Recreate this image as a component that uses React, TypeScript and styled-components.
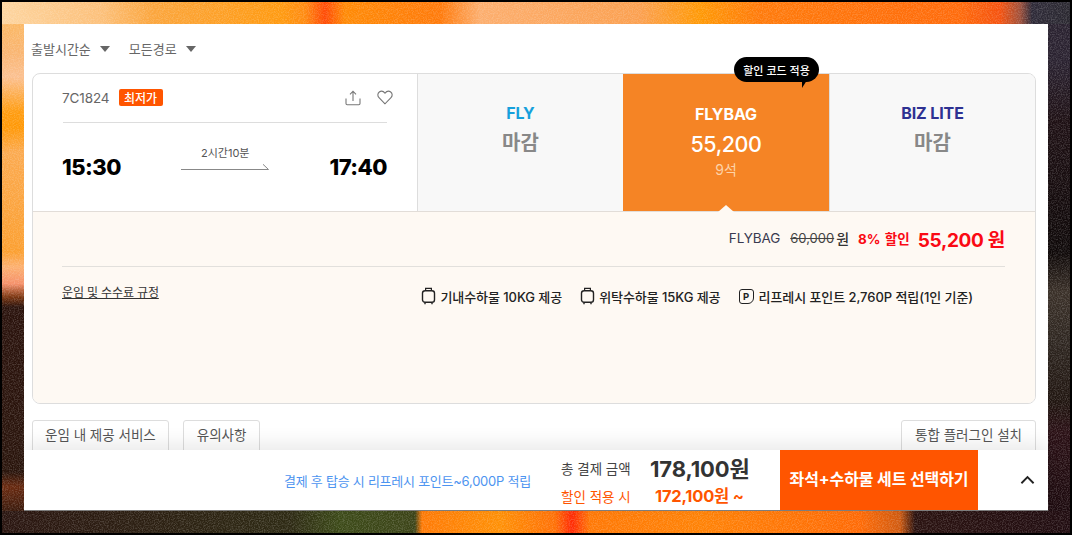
import React from "react";
import styled, { createGlobalStyle } from "styled-components";

const FONT = `Inter, "Noto Sans CJK KR", "Noto Sans", sans-serif`;
const ORANGE = "#ff5500";
const RED = "#fa0a14";

const Global = createGlobalStyle`
  html, body { margin: 0; padding: 0; background: #000; overflow: hidden; }
  * { box-sizing: border-box; }
  body { font-family: ${FONT}; }
`;

const Shell = styled.div`
  width: 1072px;
  height: 535px;
  padding: 2px;
  background: #000;
`;

const Stage = styled.div`
  position: relative;
  width: 1068px;
  height: 531px;
  padding: 22px;
  background-repeat: no-repeat;
  background-position: 0 0, 0 509px, 0 22px, 1046px 22px;
  background-size: 1068px 22px, 1068px 22px, 22px 487px, 22px 487px;
  background-image:
    linear-gradient(90deg, #fdd5a0 0, #fcc07a 100px, #fba63e 150px, #ff9a10 280px, #ff8a10 303px, #ff4a05 323px, #ff8a05 343px, #ff7a0a 438px, #fcae6e 478px, #fba050 638px, #ff9905 698px, #ff7a0a 758px, #ff6a0a 958px, #f5520f 998px, #a0503a 1018px, #2e2a38 1030px, #2a2830 1068px),
    linear-gradient(90deg, #2a1510 0, #2e2a14 288px, #3c4a18 338px, #3c4418 413px, #ff7a05 420px, #ff9005 498px, #ff7005 553px, #ff2a05 570px, #ff7805 588px, #ff8205 698px, #ff6a05 858px, #d05a10 898px, #2a1210 913px, #200c10 1068px),
    linear-gradient(180deg, #fbb865 0, #f9b571 28px, #fbc090 53px, #ff9c10 88px, #ff9805 103px, #fbaa50 128px, #fb9f30 228px, #fcb070 243px, #f5906a 260px, #7a3510 273px, #2a120c 283px, #2a150c 448px, #6a2a10 463px, #3a1a0c 487px),
    linear-gradient(180deg, #2a2230 0, #2a2230 38px, #1e1014 98px, #0e0808 228px, #3a3028 268px, #2e2620 318px, #201510 378px, #2a1015 408px, #1c0a0e 487px);
`;

const Grain = styled.svg`
  position: absolute;
  inset: 0;
  width: 100%;
  height: 100%;
  opacity: 0.16;
`;

const Modal = styled.div`
  position: relative;
  width: 1024px;
  height: 487px;
  background: #fff;
  display: flex;
  flex-direction: column;
  border-bottom: 1px solid #808080;
`;

const Scroll = styled.div`
  flex: 1;
  min-height: 0;
  overflow: hidden;
  padding: 16px 12px 0 8px;
`;

const Filters = styled.div`
  display: flex;
  align-items: center;
  gap: 19px;
  height: 16px;
  margin-bottom: 17px;
`;

const Filter = styled.div`
  display: flex;
  align-items: center;
  gap: 9px;
  font-size: 13px;
  color: #666;
  margin-left: -1px;
  margin-right: 1px;
`;

const Caret = styled.span`
  width: 0;
  height: 0;
  margin-top: 1px;
  border-left: 5px solid transparent;
  border-right: 5px solid transparent;
  border-top: 6px solid #666;
`;

const Card = styled.div`
  height: 331px;
  border: 1px solid #ddd;
  border-radius: 8px;
  display: flex;
  flex-direction: column;
`;

const TopRow = styled.div`
  display: grid;
  grid-template-columns: 385px 205px 206px 1fr;
  height: 138px;
  flex: none;
  border-bottom: 1px solid #e2ddd8;
`;

const Flight = styled.div`
  padding: 14px 30px 0 29px;
  border-right: 1px solid #ddd;
  display: flex;
  flex-direction: column;
`;

const FlightHead = styled.div`
  display: flex;
  align-items: center;
  height: 19px;
  margin-bottom: 15px;
`;

const FlightNo = styled.span`
  font-size: 13.5px;
  color: #666;
  letter-spacing: -0.1px;
`;

const Badge = styled.span`
  margin-left: 9px;
  width: 44px;
  height: 17px;
  background: ${ORANGE};
  color: #fff;
  border-radius: 2px;
  font-size: 12px;
  font-weight: 500;
  display: flex;
  align-items: center;
  justify-content: center;
`;

const HeadIcons = styled.div`
  margin-left: auto;
  display: flex;
  align-items: center;
  gap: 16px;
  margin-right: -6px;
`;

const Rule = styled.div`
  height: 1px;
  background: #ddd;
  margin-left: 1px;
`;

const Times = styled.div`
  display: flex;
  justify-content: space-between;
  align-items: center;
  margin-top: 19px;
`;

const Time = styled.span`
  font-size: 22px;
  font-weight: 800;
  color: #000;
  line-height: 50px;
  letter-spacing: -0.5px;
`;

const Duration = styled.div`
  display: flex;
  flex-direction: column;
  align-items: center;
  gap: 2px;
  font-size: 11px;
  line-height: 14px;
  color: #555;
  margin-top: -17px;
`;

const Fare = styled.div<{ $active?: boolean; $last?: boolean }>`
  position: relative;
  display: flex;
  flex-direction: column;
  align-items: center;
  background: ${(p) => (p.$active ? "#f58425" : "#f8f8f8")};
  padding-top: ${(p) => (p.$active ? "30px" : "29px")};
  border-left: ${(p) => (p.$last ? "1px solid #ddd" : "0")};
  border-top-right-radius: ${(p) => (p.$last ? "7px" : "0")};
`;

const FareName = styled.div<{ $color: string }>`
  font-size: 16px;
  font-weight: 700;
  line-height: 20px;
  color: ${(p) => p.$color};
  letter-spacing: -0.1px;
`;

const Closed = styled.div`
  margin-top: 8px;
  font-size: 20px;
  font-weight: 700;
  line-height: 24px;
  color: #888;
`;

const FarePrice = styled.div`
  margin-top: 5px;
  font-size: 21.5px;
  font-weight: 500;
  line-height: 30px;
  color: #fff;
  letter-spacing: -0.4px;
`;

const Seats = styled.div`
  margin-top: 1px;
  font-size: 14px;
  line-height: 20px;
  color: #fdd3a8;
`;

const Bubble = styled.div`
  position: absolute;
  top: -17px;
  left: 111px;
  width: 85px;
  height: 25px;
  background: #000;
  border-radius: 13px;
  color: #fff;
  font-size: 11px;
  font-weight: 500;
  display: flex;
  align-items: center;
  justify-content: center;
  &::after {
    content: "";
    position: absolute;
    left: 68px;
    top: 20px;
    width: 0;
    height: 0;
    border-top: 11px solid #000;
    border-right: 7px solid transparent;
  }
`;

const Notch = styled.span`
  position: absolute;
  left: 50%;
  bottom: -1px;
  width: 0;
  height: 0;
  margin-left: -8px;
  border-left: 8px solid transparent;
  border-right: 8px solid transparent;
  border-bottom: 7px solid #fef9f3;
`;

const Detail = styled.div`
  flex: 1;
  background: #fef9f3;
  border-radius: 0 0 7px 7px;
  padding: 0 30px 0 29px;
`;

const PriceRow = styled.div`
  height: 55px;
  border-bottom: 1px solid #e2e0dc;
  display: flex;
  justify-content: flex-end;
  align-items: center;
  padding-bottom: 2px;
`;

const PriceName = styled.span`
  font-size: 13.5px;
  color: #3a3a50;
  margin-right: 10px;
  letter-spacing: -0.1px;
`;

const Strike = styled.span`
  font-size: 13px;
  color: #444;
  text-decoration: line-through;
  margin-right: 2px;
`;

const Won = styled.span`
  font-size: 14px;
  font-weight: 500;
  color: #333;
  margin-right: 9px;
`;

const Discount = styled.span`
  font-size: 13.5px;
  font-weight: 700;
  color: ${RED};
  margin-right: 8px;
  word-spacing: 1px;
`;

const FinalPrice = styled.span`
  font-size: 19px;
  font-weight: 700;
  color: ${RED};
  letter-spacing: -0.3px;
`;

const Info = styled.div`
  display: flex;
  justify-content: space-between;
  align-items: flex-start;
`;

const RuleLink = styled.a`
  margin-top: 18px;
  font-size: 12px;
  line-height: 16px;
  color: #333;
  text-decoration: underline;
  letter-spacing: -0.15px;
`;

const Services = styled.ul`
  list-style: none;
  margin: 19px 32px 0 0;
  padding: 0;
  display: flex;
  gap: 18px;
`;

const Service = styled.li`
  display: flex;
  align-items: center;
  gap: 4px;
  height: 20px;
  font-size: 13px;
  font-weight: 500;
  color: #222;
  letter-spacing: -0.07px;
`;

const PMark = styled.span`
  width: 15px;
  height: 15px;
  border: 1.4px solid #222;
  border-radius: 3px 3px 6px 3px;
  font-size: 9.5px;
  font-weight: 700;
  display: flex;
  align-items: center;
  justify-content: center;
  margin-right: 1px;
`;

const Tabs = styled.div`
  display: flex;
  gap: 14px;
  margin-top: 16px;
`;

const Tab = styled.button<{ $end?: boolean; $pad: number }>`
  height: 36px;
  padding: 0 ${(p) => p.$pad}px 8px;
  background: #fff;
  border: 1px solid #ddd;
  border-radius: 3px;
  font-family: ${FONT};
  font-size: 13.5px;
  color: #555;
  margin-left: ${(p) => (p.$end ? "auto" : "0")};
`;

const Footer = styled.div`
  position: relative;
  height: 60px;
  flex: none;
  background: #fff;
  display: flex;
  align-items: stretch;
  box-shadow: 0 -6px 18px rgba(0, 0, 0, 0.09);
`;

const Points = styled.div`
  margin-left: 260px;
  width: 277px;
  font-size: 13px;
  letter-spacing: -0.25px;
  color: #4d94f0;
  align-self: center;
  margin-top: 1px;
`;

const Totals = styled.div`
  width: 219px;
  display: grid;
  grid-template-columns: 89px 1fr;
  grid-template-rows: 30px 26px;
  align-content: start;
  padding-top: 3px;
`;

const TotalLabel = styled.span<{ $accent?: boolean }>`
  font-size: 13.5px;
  color: ${(p) => (p.$accent ? ORANGE : "#444")};
  align-self: center;
`;

const TotalValue = styled.span`
  font-size: 22px;
  font-weight: 700;
  color: #333;
  align-self: center;
  letter-spacing: -0.12px;
  margin-top: -2px;
`;

const SaleValue = styled.span`
  font-size: 16.5px;
  font-weight: 700;
  color: ${ORANGE};
  padding-left: 5px;
  align-self: center;
  letter-spacing: -0.2px;
  margin-top: -2px;
`;

const Cta = styled.button`
  width: 198px;
  border: 0;
  background: ${ORANGE};
  color: #fff;
  font-family: ${FONT};
  font-size: 16px;
  font-weight: 700;
  padding: 0 0 5px;
  letter-spacing: -0.1px;
`;

const Toggle = styled.div`
  flex: 1;
  display: flex;
  align-items: center;
  justify-content: center;
  padding-left: 28px;
`;

const ShareIcon = () => (
  <svg width="16" height="16" viewBox="0 0 16 16" fill="none" stroke="#777" strokeWidth="1.1">
    <path d="M8 11V1.5M5 4.3L8 1.2l3 3.1" />
    <path d="M1 8.5v5c0 .8.4 1.2 1.2 1.2h11.6c.8 0 1.2-.4 1.2-1.2v-5" />
  </svg>
);

const HeartIcon = () => (
  <svg width="16" height="15" viewBox="0 0 16 15" fill="none" stroke="#777" strokeWidth="1.1">
    <path d="M8 13.8L2 7.6C.3 5.8.6 3.2 2.3 2 4 .8 6.4 1.2 8 3.2 9.6 1.2 12 .8 13.7 2c1.7 1.2 2 3.8.3 5.6L8 13.8z" />
  </svg>
);

const BagIcon = () => (
  <svg width="15" height="18" viewBox="0 0 15 18" fill="none" stroke="#222" strokeWidth="1.4">
    <rect x="1.5" y="3.7" width="12" height="11.6" rx="2.6" />
    <path d="M4.6 3.6V1.3h5.8v2.3" strokeWidth="1.2" />
    <path d="M4 15.5v1.7M11 15.5v1.7" strokeWidth="1.4" />
  </svg>
);

const LongArrow = () => (
  <svg width="90" height="9" viewBox="0 0 90 9" fill="none" stroke="#888" strokeWidth="1">
    <path d="M1 7.5h87.5L83 2.3" />
  </svg>
);

const Chevron = () => (
  <svg width="15" height="10" viewBox="0 0 16 10" fill="none" stroke="#222" strokeWidth="2">
    <path d="M1.5 8.5L8 2l6.5 6.5" />
  </svg>
);

export default function App() {
  return (
    <Shell>
      <Global />
      <Stage>
        <Grain aria-hidden="true">
          <filter id="grain" x="0" y="0" width="100%" height="100%">
            <feTurbulence type="fractalNoise" baseFrequency="0.8" numOctaves="2" stitchTiles="stitch" />
            <feColorMatrix type="matrix" values="0 0 0 0 1  0 0 0 0 1  0 0 0 0 1  3 0 0 0 -1.2" />
          </filter>
          <rect width="100%" height="100%" filter="url(#grain)" />
        </Grain>
        <Modal>
          <Scroll>
            <Filters>
              <Filter>출발시간순 <Caret /></Filter>
              <Filter>모든경로 <Caret /></Filter>
            </Filters>
            <Card>
              <TopRow>
                <Flight>
                  <FlightHead>
                    <FlightNo>7C1824</FlightNo>
                    <Badge>최저가</Badge>
                    <HeadIcons>
                      <ShareIcon />
                      <HeartIcon />
                    </HeadIcons>
                  </FlightHead>
                  <Rule />
                  <Times>
                    <Time>15:30</Time>
                    <Duration>
                      2시간10분
                      <LongArrow />
                    </Duration>
                    <Time>17:40</Time>
                  </Times>
                </Flight>
                <Fare>
                  <FareName $color="#16a0dc">FLY</FareName>
                  <Closed>마감</Closed>
                </Fare>
                <Fare $active>
                  <Bubble>할인 코드 적용</Bubble>
                  <FareName $color="#fff">FLYBAG</FareName>
                  <FarePrice>55,200</FarePrice>
                  <Seats>9석</Seats>
                  <Notch />
                </Fare>
                <Fare $last>
                  <FareName $color="#2e3192">BIZ LITE</FareName>
                  <Closed>마감</Closed>
                </Fare>
              </TopRow>
              <Detail>
                <PriceRow>
                  <PriceName>FLYBAG</PriceName>
                  <Strike>60,000</Strike>
                  <Won>원</Won>
                  <Discount>8% 할인</Discount>
                  <FinalPrice>55,200 원</FinalPrice>
                </PriceRow>
                <Info>
                  <RuleLink>운임 및 수수료 규정</RuleLink>
                  <Services>
                    <Service><BagIcon />기내수하물 10KG 제공</Service>
                    <Service><BagIcon />위탁수하물 15KG 제공</Service>
                    <Service><PMark>P</PMark>리프레시 포인트 2,760P 적립(1인 기준)</Service>
                  </Services>
                </Info>
              </Detail>
            </Card>
            <Tabs>
              <Tab $pad={12}>운임 내 제공 서비스</Tab>
              <Tab $pad={13}>유의사항</Tab>
              <Tab $end $pad={13}>통합 플러그인 설치</Tab>
            </Tabs>
          </Scroll>
          <Footer>
            <Points>결제 후 탑승 시 리프레시 포인트~6,000P 적립</Points>
            <Totals>
              <TotalLabel>총 결제 금액</TotalLabel>
              <TotalValue>178,100원</TotalValue>
              <TotalLabel $accent>할인 적용 시</TotalLabel>
              <SaleValue>172,100원 ~</SaleValue>
            </Totals>
            <Cta>좌석+수하물 세트 선택하기</Cta>
            <Toggle><Chevron /></Toggle>
          </Footer>
        </Modal>
      </Stage>
    </Shell>
  );
}
